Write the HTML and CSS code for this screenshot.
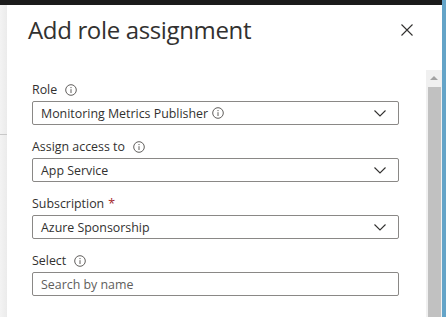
FILE: index.html
```html
<!DOCTYPE html>
<html lang="en">
<head>
    <meta charset="UTF-8">
    <meta name="viewport" content="width=device-width, initial-scale=1.0">
    <title>Add role assignment</title>
    <link rel="stylesheet" href="styles.css">
</head>
<body>
    <div class="topbar"></div>
    <div class="page">
        <div class="backdrop"><div class="backdrop-line"></div></div>

        <div class="panel">
            <div class="panel-header">
                <h1>Add role assignment</h1>
                <button class="close-btn" title="Close">
                    <svg width="12" height="12" viewBox="0 0 12 12"><path d="M0.5 0.5 L11.5 11.5 M11.5 0.5 L0.5 11.5" stroke="#323130" stroke-width="1.1" fill="none"/></svg>
                </button>
            </div>

            <div class="panel-body">
                <div class="form">
                    <div class="field">
                        <div class="label">Role <span class="info"></span></div>
                        <div class="dropdown">
                            <span>Monitoring Metrics Publisher <span class="info inline"></span></span>
                            <span class="chevron"></span>
                        </div>
                    </div>
                    <div class="field">
                        <div class="label">Assign access to <span class="info"></span></div>
                        <div class="dropdown">
                            <span>App Service</span>
                            <span class="chevron"></span>
                        </div>
                    </div>
                    <div class="field">
                        <div class="label">Subscription <span class="required">*</span></div>
                        <div class="dropdown">
                            <span>Azure Sponsorship</span>
                            <span class="chevron"></span>
                        </div>
                    </div>
                    <div class="field">
                        <div class="label">Select <span class="info"></span></div>
                        <input class="search" type="text" placeholder="Search by name">
                    </div>
                </div>

                <!-- fake scrollbar -->
                <div class="scrollbar">
                    <div class="scroll-arrow"></div>
                    <div class="scroll-thumb"></div>
                </div>
            </div>
        </div>

        <div class="edge"></div>
    </div>

    <script>
        // info + chevron icons share the same svg markup
        var infoSvg = '<svg width="12" height="12" viewBox="0 0 12 12"><circle cx="6" cy="6" r="5.3" stroke="#605e5c" stroke-width="1" fill="none"/><circle cx="6" cy="3.6" r="0.7" fill="#605e5c"/><path d="M6 5.2 V9" stroke="#605e5c" stroke-width="1"/></svg>';
        var chevronSvg = '<svg width="12" height="7" viewBox="0 0 12 7"><path d="M0.5 0.5 L6 6 L11.5 0.5" stroke="#323130" stroke-width="1.1" fill="none"/></svg>';

        document.querySelectorAll('.info').forEach(function (el) { el.innerHTML = infoSvg; });
        document.querySelectorAll('.chevron').forEach(function (el) { el.innerHTML = chevronSvg; });
    </script>
</body>
</html>
```

FILE: styles.css
```css
html, body {
    margin: 0;
    height: 100%;
    overflow: hidden;
}
body {
    font-family: "Open Sans", "Noto Sans", Arial, sans-serif;
    color: #323130;
    background: #ffffff;
    display: flex;
    flex-direction: column;
}
.topbar {
    height: 5px;
    background: #1b1b1b;
    margin-right: 4px;
}
.page {
    flex: 1;
    display: flex;
}
.backdrop {
    width: 7px;
    background: linear-gradient(to right, #f3f3f3, #ebebeb);
    padding-top: 129px;
}
.backdrop-line {
    height: 1px;
    background: #c8c8c8;
}
.panel {
    flex: 1;
    display: flex;
    flex-direction: column;
    background: white;
}
.panel-header {
    height: 65px;
    display: flex;
    justify-content: space-between;
    align-items: flex-start;
}
.panel-header h1 {
    margin: 9px 0 0 21px;
    font-size: 24px;
    font-weight: 400;
    line-height: 32px;
    letter-spacing: -0.35px;
}
.close-btn {
    background: none;
    border: none;
    padding: 0;
    margin: 19px 29px 0 0;
    width: 12px;
    height: 12px;
    display: flex;
    cursor: pointer;
}
.panel-body {
    flex: 1;
    display: flex;
}
.form {
    flex: 1;
    padding: 10px 0 0 25px;
}
.field {
    width: 367px;
    margin-bottom: 12px;
}
.label {
    font-size: 12.4px;
    line-height: 20px;
    height: 20px;
    margin-bottom: 1px;
    display: flex;
    align-items: center;
}
.label .info {
    margin-left: 8px;
}
.info {
    display: inline-flex;
    width: 12px;
    height: 12px;
}
.info.inline {
    margin-left: 1px;
    vertical-align: -1px;
}
.required {
    color: #a4262c;
    margin-left: 4px;
}
.dropdown, .search {
    box-sizing: border-box;
    height: 24px;
    border: 1px solid #8a8886;
    border-radius: 2px;
    font-family: inherit;
    font-size: 12.4px;
    color: #323130;
    display: flex;
    align-items: center;
    justify-content: space-between;
    padding: 0 9px 0 8px;
}
.search {
    width: 100%;
    outline: none;
    margin-top: 1px;
}
.search::placeholder {
    color: #605e5c;
}
.chevron {
    display: inline-flex;
    margin-right: 3px;
}
.scrollbar {
    width: 16px;
    background: #f0f0f0;
    display: flex;
    flex-direction: column;
    align-items: center;
}
.scroll-arrow {
    margin-top: 6px;
    width: 0;
    height: 0;
    border-left: 4px solid transparent;
    border-right: 4px solid transparent;
    border-bottom: 4px solid #a3a3a3;
}
.scroll-thumb {
    margin-top: 7px;
    width: 13px;
    flex: 1;
    background: #c1c1c1;
}
.edge {
    width: 4px;
    background: #64a4c8;
    margin-top: -5px;
}
```
